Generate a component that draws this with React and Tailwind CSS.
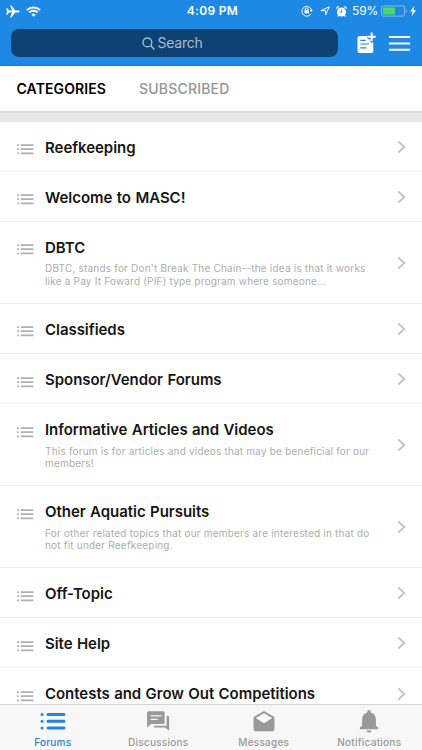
const forums = [
  { title: 'Reefkeeping' },
  { title: 'Welcome to MASC!' },
  {
    title: 'DBTC',
    lines: [
      "DBTC, stands for Don't Break The Chain--the idea is that it works",
      'like a Pay It Foward (PIF) type program where someone...',
    ],
  },
  { title: 'Classifieds' },
  { title: 'Sponsor/Vendor Forums' },
  {
    title: 'Informative Articles and Videos',
    lines: ['This forum is for articles and videos that may be beneficial for our', 'members!'],
  },
  {
    title: 'Other Aquatic Pursuits',
    lines: ['For other related topics that our members are interested in that do', 'not fit under Reefkeeping.'],
  },
  { title: 'Off-Topic' },
  { title: 'Site Help' },
  { title: 'Contests and Grow Out Competitions' },
];

function ListIcon() {
  return (
    <svg className="block h-[12px] w-[17px] shrink-0" viewBox="0 0 17 12" fill="#b0b0b0">
      <path d="M.2 1.2h1.8v1.8H.2zM3.7 1.2h12.7v1.8H3.7zM.2 5.3h1.8v1.8H.2zM3.7 5.3h12.7v1.8H3.7zM.2 9.4h1.8v1.8H.2zM3.7 9.4h12.7v1.8H3.7z" />
    </svg>
  );
}

function Chevron() {
  return (
    <svg className="mt-[1px] mr-[16px] block h-[14px] w-[9px] shrink-0" viewBox="0 0 9 14" fill="none" stroke="#c2c2c2" strokeWidth="1.9">
      <path d="M1.3 1.4 7.2 7 1.3 12.6" />
    </svg>
  );
}

function Row({ title, lines }) {
  return (
    <div className={`flex shrink-0 border-b border-[#ebebeb] pl-[16.5px] ${lines ? 'h-[81.95px]' : 'h-[50.2px]'}`}>
      <div className="pt-[21.5px]">
        <ListIcon />
      </div>
      <div className="flex-1 pt-[16px] pl-[11.5px]">
        <div className="text-[15px] leading-[20px] font-semibold tracking-[-0.04px] whitespace-nowrap text-[#151515] [word-spacing:0.7px]">{title}</div>
        {lines && (
          <div className="pt-[4.5px] text-[10px] leading-[12.2px] tracking-[0.2px] whitespace-nowrap text-[#acacac]">
            {lines.map((line) => (
              <div key={line}>{line}</div>
            ))}
          </div>
        )}
      </div>
      <div className="flex items-center">
        <Chevron />
      </div>
    </div>
  );
}

function StatusBar() {
  return (
    <div className="grid h-[22px] grid-cols-[1fr_auto_1fr] items-center pr-[3px] pl-[6px] text-white">
      <div className="flex items-center gap-[6px]">
        <svg className="h-[13px] w-[14px]" viewBox="0 0 14 13" fill="white">
          <path d="M.2 3.2h1.1l1.8 2.4h3L4 .6h1.4l3.9 5h3.1c1.7.3 1.7 1.5 0 1.8H9.3l-3.9 5H4l2.1-5h-3L1.3 9.8H.2L1 6.5z" />
        </svg>
        <svg className="h-[11px] w-[15px]" viewBox="0 0 15 11" fill="none" stroke="white" strokeWidth="2">
          <path d="M.9 4.1a9.4 9.4 0 0 1 13.2 0M3.3 6.5a6 6 0 0 1 8.4 0" />
          <path d="M7.5 10.8 5.3 8.6a3.1 3.1 0 0 1 4.4 0z" fill="white" stroke="none" />
        </svg>
      </div>
      <div className="text-[12px] leading-[22px] font-semibold tracking-[0.32px]">4:09 PM</div>
      <div className="flex items-center justify-end">
        <svg className="mr-[7px] h-[12px] w-[12px]" viewBox="0 0 12 12" fill="none" stroke="white" strokeWidth="1">
          <path d="M10 8.8A4.9 4.9 0 1 1 10.5 5" />
          <path d="M8.9 4.9h2.8l-1.3 2z" fill="white" stroke="none" />
          <path d="M4.4 5.5V4.2a1.3 1.3 0 0 1 2.6 0v1.3" />
          <path d="M3.5 5.2h4.4v3.2H3.5z" fill="white" stroke="none" />
        </svg>
        <svg className="mr-[6px] h-[10px] w-[10px]" viewBox="0 0 10 10" fill="none" stroke="white" strokeWidth="1" strokeLinejoin="round">
          <path d="M9.2.8 5.5 9V4.7H.8z" />
        </svg>
        <svg className="mr-[5px] h-[11px] w-[11px]" viewBox="0 0 11 11">
          <circle cx="5.5" cy="6" r="4.5" fill="white" />
          <path d="M.3 3.2A2.2 2.2 0 0 1 3.5.6zM10.7 3.2A2.2 2.2 0 0 0 7.5.6zM1.8 9l-.7 1.4.8.4 1.2-1zM9.2 9l.7 1.4-.8.4-1.2-1z" fill="white" />
          <path d="M5.6 3.4V6.3H3.8" stroke="#1e88e5" strokeWidth=".9" fill="none" />
        </svg>
        <span className="mr-[3px] text-[12px] leading-[22px] tracking-[-0.2px]">59%</span>
        <svg className="h-[12px] w-[38px]" viewBox="0 0 38 12">
          <rect x=".5" y=".9" width="23" height="10.2" rx="2" fill="none" stroke="#83bdf0" />
          <rect x="2" y="2.4" width="12" height="7.2" rx=".6" fill="#4cd964" />
          <path d="M24.8 4.2c1.6.5 1.6 3.1 0 3.6z" fill="#83bdf0" />
          <path d="m33.4.8-4.2 5.8h2.5l-1.2 4.6 4.5-6h-2.6z" fill="white" />
        </svg>
      </div>
    </div>
  );
}

function Header() {
  return (
    <header className="h-[66px] shrink-0 border-b border-[#1976d2] bg-[#1e88e5]">
      <StatusBar />
      <div className="flex pt-[7px] pl-[11px]">
        <div className="flex h-[28px] w-[327px] items-center justify-center rounded-[8px] bg-[#0e4272] pr-[5px] text-[#a7bcd0]">
          <svg className="mr-[3px] h-[13px] w-[13px]" viewBox="0 0 13 13" fill="none" stroke="currentColor" strokeWidth="1.4">
            <circle cx="5.4" cy="5.4" r="4.4" />
            <path d="m8.6 8.6 3.8 3.8" />
          </svg>
          <span className="text-[14px] leading-[20px] tracking-[-0.25px]">Search</span>
        </div>
        <svg className="mt-[3px] ml-[19px] block h-[22px] w-[20px]" viewBox="0 0 20 22">
          <path d="M2.5 4h8v3.3h3v3.2h2.8v8.6a2 2 0 0 1-2 2H2.5a2 2 0 0 1-2-2V6a2 2 0 0 1 2-2z" fill="white" />
          <path d="M3.3 8.4h5.4M3.3 12h8.8M3.3 15.9h6.2" stroke="#1e88e5" strokeWidth="1.2" />
          <path d="M14.7.5v8.4M10.7 4.7h8" stroke="white" strokeWidth="2" />
        </svg>
        <svg className="mt-[6px] ml-[12px] block h-[17px] w-[21px]" viewBox="0 0 21 17" stroke="white" strokeWidth="2">
          <path d="M0 2h21M0 8.4h21M0 14.7h21" />
        </svg>
      </div>
    </header>
  );
}

function TabIcon({ name }) {
  if (name === 'Forums') {
    return (
      <svg className="h-[24px] w-[26px]" viewBox="0 0 26 24" stroke="currentColor" strokeWidth="3" strokeLinecap="round">
        <path d="M2 5.5h.1M8 5.5h16M2 12.3h.1M8 12.3h16M2 19.1h.1M8 19.1h16" />
      </svg>
    );
  }
  if (name === 'Discussions') {
    return (
      <svg className="h-[24px] w-[24px]" viewBox="0 0 24 24" fill="currentColor">
        <path d="M2.6 2.2h14.5a1.5 1.5 0 0 1 1.5 1.5v9.9a1.5 1.5 0 0 1-1.5 1.5H5l-3.9 3.6v-15a1.5 1.5 0 0 1 1.5-1.5z" />
        <path d="M20.6 6.7h1a1.5 1.5 0 0 1 1.5 1.5v13.7l-3.8-3.4H9.1a1.3 1.3 0 0 1-1.3-1.3v-.5h12.8z" />
        <path d="M4.5 6.8h11M4.5 10.4h7.2" stroke="#f7f7f7" strokeWidth="1.3" />
      </svg>
    );
  }
  if (name === 'Messages') {
    return (
      <svg className="h-[24px] w-[24px]" viewBox="0 0 24 24" fill="currentColor">
        <path transform="translate(0 .5)" fillRule="evenodd" d="M12 1.5 2.5 7.1a2 2 0 0 0-.9 1.7v11a2 2 0 0 0 2 2h16.8a2 2 0 0 0 2-2v-11a2 2 0 0 0-.9-1.7zm0 2.2L20.3 8.5 12 13.8 3.7 8.5z" />
      </svg>
    );
  }
  return (
    <svg className="h-[24px] w-[24px]" viewBox="0 0 24 24" fill="currentColor">
      <path transform="translate(0 .5)" d="M10.3 2.9V2.2a1.7 1.7 0 0 1 3.4 0v.7c3.5.8 5.2 3.5 5.2 7v6.2l2.2 2.2v1.5H2.9v-1.5l2.2-2.2V9.9c0-3.5 1.7-6.2 5.2-7zM9.6 20.9h4.8a2.4 2.2 0 0 1-4.8 0z" />
    </svg>
  );
}

function TabBar() {
  return (
    <nav className="grid h-[46px] shrink-0 grid-cols-4 border-t border-[#d4d4d4] bg-[#f7f7f7]">
      {['Forums', 'Discussions', 'Messages', 'Notifications'].map((name) => (
        <div key={name} className={`flex flex-col items-center pt-[4px] ${name === 'Forums' ? 'text-[#2482d8]' : 'text-[#999999]'}`}>
          <TabIcon name={name} />
          <span className="mt-[3px] text-[10px] leading-[12px] font-medium tracking-[0.25px]">{name}</span>
        </div>
      ))}
    </nav>
  );
}

export default function App() {
  return (
    <div className="flex h-[750px] w-[422px] flex-col overflow-hidden bg-white font-['Inter','Liberation_Sans',sans-serif]">
      <Header />
      <div className="flex h-[45px] shrink-0 items-center pl-[16.5px] text-[14px] leading-[20px]">
        <span className="w-[122.5px] font-semibold tracking-[0.1px] text-black">CATEGORIES</span>
        <span className="font-medium tracking-[0.2px] text-[#949494]">SUBSCRIBED</span>
      </div>
      <div className="h-[10.5px] shrink-0 border-t-2 border-[#dddddd] bg-[#e7e7e7]" />
      <main className="flex min-h-0 flex-1 flex-col overflow-hidden">
        {forums.map((forum) => (
          <Row key={forum.title} {...forum} />
        ))}
      </main>
      <TabBar />
    </div>
  );
}
